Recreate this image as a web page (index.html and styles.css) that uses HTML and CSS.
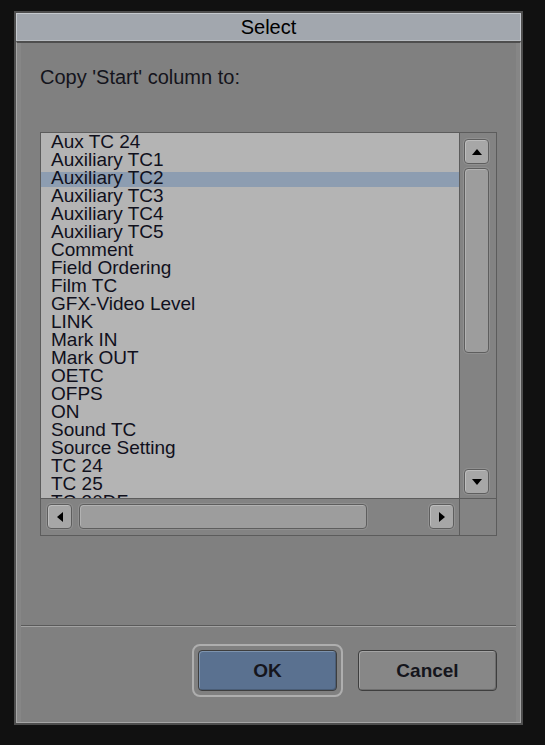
FILE: index.html
```html
<!DOCTYPE html>
<html>
<head>
<meta charset="utf-8">
<title>Select</title>
<link rel="stylesheet" href="styles.css">
</head>
<body>
<div class="dialog">
  <div class="titlebar">Select</div>
  <div class="panel">
    <p class="label">Copy 'Start' column to:</p>
    <div class="list">
      <div class="items">
        <div class="row">Aux TC 24</div>
        <div class="row">Auxiliary TC1</div>
        <div class="row sel">Auxiliary TC2</div>
        <div class="row">Auxiliary TC3</div>
        <div class="row">Auxiliary TC4</div>
        <div class="row">Auxiliary TC5</div>
        <div class="row">Comment</div>
        <div class="row">Field Ordering</div>
        <div class="row">Film TC</div>
        <div class="row">GFX-Video Level</div>
        <div class="row">LINK</div>
        <div class="row">Mark IN</div>
        <div class="row">Mark OUT</div>
        <div class="row">OETC</div>
        <div class="row">OFPS</div>
        <div class="row">ON</div>
        <div class="row">Sound TC</div>
        <div class="row">Source Setting</div>
        <div class="row">TC 24</div>
        <div class="row">TC 25</div>
        <div class="row">TC 30DF</div>
      </div>
      <div class="vscroll">
        <div class="sbtn"><span class="arr up"></span></div>
        <div class="thumb vthumb"></div>
        <div class="sbtn down-btn"><span class="arr down"></span></div>
      </div>
      <div class="hscroll">
        <div class="sbtn"><span class="arr left"></span></div>
        <div class="thumb hthumb"></div>
        <div class="sbtn right-btn"><span class="arr right"></span></div>
      </div>
      <div class="corner"></div>
    </div>
    <div class="sep"></div>
    <div class="buttons">
      <span class="ring focus"><a href="javascript:void(0);" class="btn ok">OK</a></span>
      <span class="ring"><a href="javascript:void(0);" class="btn">Cancel</a></span>
    </div>
  </div>
</div>
</body>
</html>
```

FILE: styles.css
```css
*{padding:0;margin:0;box-sizing:border-box;}
body{background:#111;font-family:"Liberation Sans",Arial,sans-serif;}
a{text-decoration:none;}

.dialog{width:509px;height:714px;margin:11px 0 0 14px;border:2px solid #4e4e4e;display:flex;flex-direction:column;}
.titlebar{height:28px;background:#a2a7ae;border:1px solid #c6cacf;border-bottom:1px solid #b8bcc1;text-align:center;font-size:20px;line-height:27px;color:#000;}
.panel{flex:1;background:#808080;border:1px solid #a6a6a6;border-top:2px solid #4e4e4e;padding:0 4px;box-shadow:inset 4px 0 0 #868686,inset -4px 0 0 #868686;display:flex;flex-direction:column;}

.label{margin:22px 0 0 19px;font-size:20px;line-height:24px;color:#14141c;}

.list{margin:43px 0 0 19px;width:457px;height:404px;border:1px solid #5c5c5c;display:grid;grid-template-columns:418px 37px;grid-template-rows:365px 37px;}
.items{background:#b4b4b4;overflow:hidden;}
.row{height:18px;padding-left:10px;font-size:19px;line-height:18px;color:#10101c;white-space:nowrap;}
.sel{background:linear-gradient(to bottom,transparent 3px,#8d9db1 3px);}

.vscroll{background:#838383;border-left:1px solid #5c5c5c;padding:6px 0 4px 4px;display:flex;flex-direction:column;}
.hscroll{background:#838383;border-top:1px solid #5c5c5c;padding:5px 5px 0 6px;display:flex;}
.corner{background:#838383;border-left:1px solid #5c5c5c;border-top:1px solid #5c5c5c;}

.sbtn{width:25px;height:25px;flex:none;background:#a7a7a7;border:1px solid #5e5e5e;border-radius:4px;box-shadow:inset 1px 1px 0 #bdbdbd,0 0 0 1px #909090;display:flex;align-items:center;justify-content:center;}
.down-btn{margin-top:auto;}
.right-btn{margin-left:auto;}
.thumb{background:#9d9d9d;border:1px solid #5e5e5e;border-radius:4px;box-shadow:inset 1px 1px 0 #b2b2b2,0 0 0 1px #909090;}
.vthumb{width:25px;height:185px;margin-top:4px;}
.hthumb{width:288px;height:25px;margin-left:7px;}

.arr{width:0;height:0;border-style:solid;}
.up{border-width:0 5px 6px 5px;border-color:transparent transparent #000 transparent;}
.down{border-width:6px 5px 0 5px;border-color:#000 transparent transparent transparent;}
.left{border-width:5px 6px 5px 0;border-color:transparent #000 transparent transparent;}
.right{border-width:5px 0 5px 6px;border-color:transparent transparent transparent #000;}

.sep{margin-top:89px;height:2px;border-top:1px solid #5a5a5a;border-bottom:1px solid #a2a2a2;}

.buttons{display:flex;justify-content:flex-end;margin:17px 13px 0 0;gap:9px;}
.ring{display:block;padding:4px;border:2px solid transparent;border-radius:8px;}
.focus{border-color:#aeaeae;}
.btn{display:block;width:139px;height:41px;border:1px solid #3e3e3e;border-radius:4px;background:#878787;box-shadow:inset 1px 1px 0 #a4a4a4,inset -1px -1px 0 #6e6e6e;font-size:19px;font-weight:bold;line-height:39px;text-align:center;color:#15151c;}
.ok{background:#5a7190;box-shadow:inset 1px 1px 0 #7d93ae,inset -1px -1px 0 #4a5d76;}
```
